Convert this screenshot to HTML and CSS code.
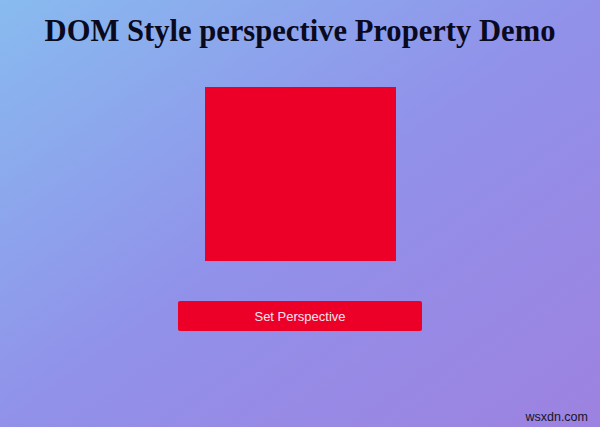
FILE: index.html
```html
<!DOCTYPE html>
<html>
<head>
<meta charset="utf-8">
<link rel="stylesheet" href="styles.css">
</head>
<body>
<div class="page">
  <h1 class="title">DOM Style perspective Property Demo</h1>
  <div class="box"></div>
  <button class="btn">Set Perspective</button>
  <div class="mark">wsxdn.com</div>
</div>
</body>
</html>
```
FILE: styles.css
```css
html, body {
  margin: 0;
  padding: 0;
  width: 600px;
  height: 427px;
  overflow: hidden;
}
.page {
  position: relative;
  width: 600px;
  height: 427px;
  background: linear-gradient(to bottom right, #88bbef 0%, #9191ea 50%, #9d82e0 100%);
  display: flex;
  flex-direction: column;
  align-items: center;
}
.title {
  margin: 14px 0 0;
  font-family: "Liberation Serif", "Times New Roman", serif;
  font-weight: bold;
  font-size: 30.6px;
  line-height: 34px;
  color: #0a0a1e;
}
.box {
  width: 191px;
  height: 174px;
  margin-top: 39px;
  margin-left: 1px;
  background: #ec0028;
}
.btn {
  margin-top: 40px;
  width: 244px;
  height: 30px;
  border: none;
  border-radius: 2px;
  background: #ec0028;
  color: #f4e6ee;
  font-family: "Liberation Sans", Arial, sans-serif;
  font-size: 13px;
}
.mark {
  position: absolute;
  right: 12px;
  bottom: 3px;
  font-family: "Liberation Sans", Arial, sans-serif;
  font-size: 12.5px;
  color: #15152a;
}
```
